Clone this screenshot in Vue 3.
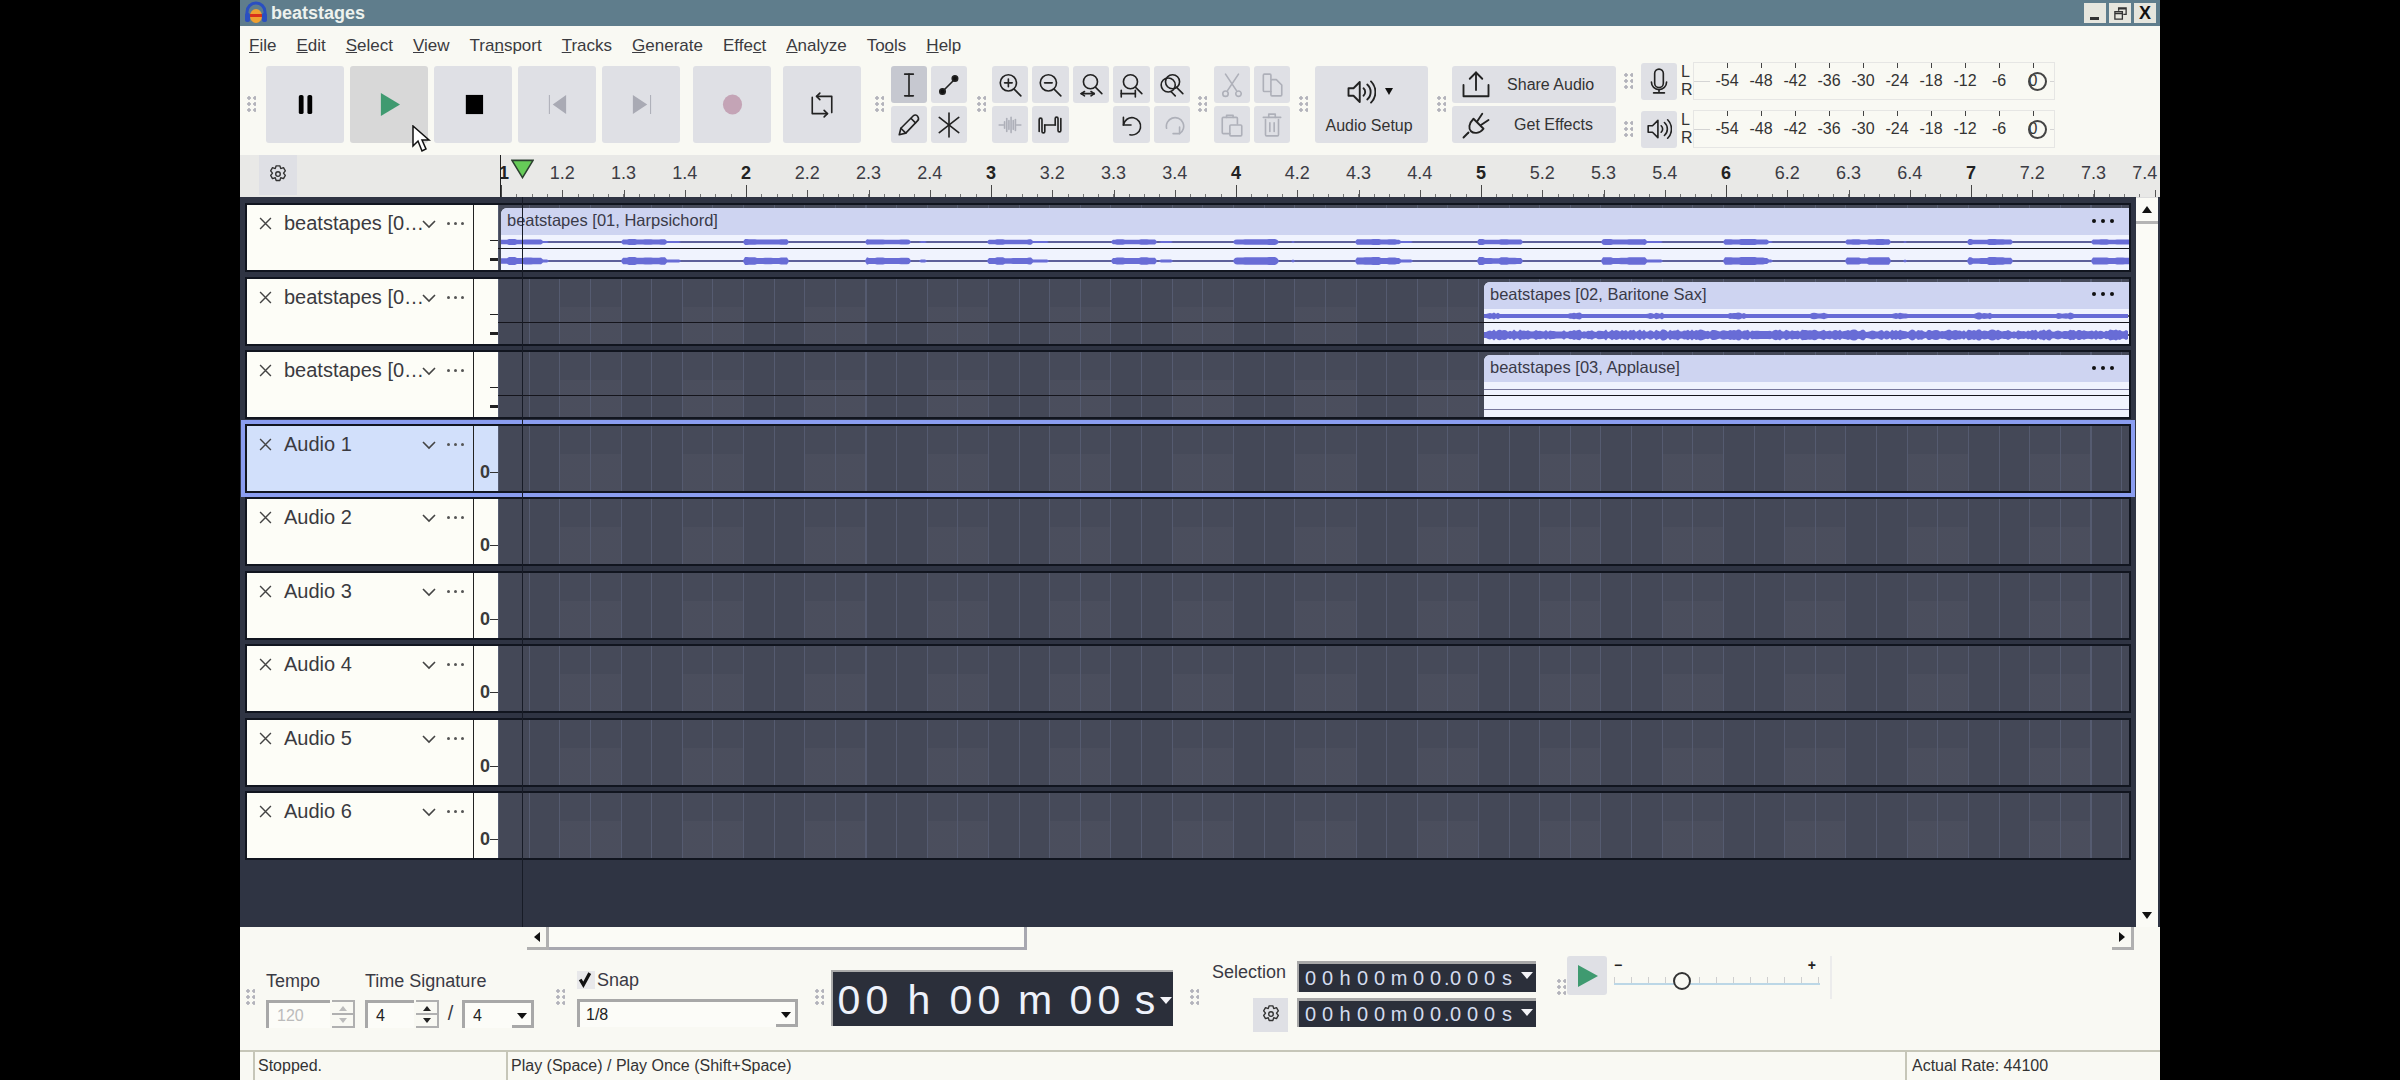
<script setup>
const menus = [
  ['', 'F', 'ile'], ['', 'E', 'dit'], ['', 'S', 'elect'], ['', 'V', 'iew'], ['Tra', 'n', 'sport'], ['', 'T', 'racks'],
  ['', 'G', 'enerate'], ['Effe', 'c', 't'], ['', 'A', 'nalyze'], ['To', 'o', 'ls'], ['', 'H', 'elp']
]

const icons = {
  ibeam: ['M8 2h8', 'M8 22h8', 'M12 2v20'],
  envelope: ['M6 18L18 6', 'M3.5 18a2.5 2.5 0 1 0 5 0a2.5 2.5 0 1 0-5 0Z', 'M15 6a2.5 2.5 0 1 0 5 0a2.5 2.5 0 1 0-5 0Z'],
  pencil: ['M3 21l1.500-6L16 3.500c1-1 3-1 4 .5s1 3 0 4L9 19.500z', 'M14 6l4 4', 'M4.500 15l4.500 4.500'],
  multi: ['M12 1v22', 'M3 5l18 14', 'M21 5L3 19'],
  zoomin: ['M3 10a7.500 7.500 0 1 0 15 0a7.500 7.500 0 1 0-15 0Z', 'M16 16l6 6', 'M7 10h7', 'M10.500 6.500v7'],
  zoomout: ['M3 10a7.500 7.500 0 1 0 15 0a7.500 7.500 0 1 0-15 0Z', 'M16 16l6 6', 'M7 10h7'],
  zoomsel: ['M5 9a6.500 6.500 0 1 0 13 0a6.500 6.500 0 1 0-13 0Z', 'M16 14l6 6', 'M3 20h12', 'M3 20l3-2', 'M3 20l3 2', 'M15 20l-3-2', 'M15 20l-3 2'],
  zoomfit: ['M5 9a6.500 6.500 0 1 0 13 0a6.500 6.500 0 1 0-13 0Z', 'M16 14l6 6', 'M3 20h13', 'M3 17v6', 'M16 17v6'],
  zoomtoggle: ['M2 12a6.500 6.500 0 1 0 13 0a6.500 6.500 0 1 0-13 0Z', 'M6 9a6.500 6.500 0 1 0 13 0a6.500 6.500 0 1 0-13 0Z', 'M16 14l6 6', 'M11 18l4 4'],
  silence: ['M2 12h4', 'M7 9v6', 'M9 6v12', 'M11 8v8', 'M13 5v14', 'M15 8v8', 'M17 7v10', 'M18 12h4'],
  trim: ['M2 18V7a1.300 1.300 0 0 1 2.600 0v11a1.300 1.300 0 0 0 2.600 0V12', 'M7 12h10', 'M22 6v11a1.300 1.300 0 0 1-2.600 0V6a1.300 1.300 0 0 0-2.600 0v6'],
  undo: ['M5 5v7h7', 'M5 12A8 8 0 1 1 11 21'],
  redo: ['M19 14v6h-6', 'M19 20A8 8 0 1 0 7 15'],
  cut: ['M6 2l10 15', 'M18 2L8 17', 'M3.500 20a2.500 2.500 0 1 0 5 0a2.500 2.500 0 1 0-5 0Z', 'M15.500 20a2.500 2.500 0 1 0 5 0a2.500 2.500 0 1 0-5 0Z'],
  copy: ['M11 18H5a1 1 0 0 1-1-1V3a1 1 0 0 1 1-1h5a1 1 0 0 1 1 1v4', 'M12 7h4l5 5v9a1 1 0 0 1-1 1h-8a1 1 0 0 1-1-1V8a1 1 0 0 1 1-1z'],
  paste: ['M10 20H4a1 1 0 0 1-1-1V6a1 1 0 0 1 1-1h12a1 1 0 0 1 1 1v5', 'M7 5V3h6v2', 'M11 12h9a1 1 0 0 1 1 1v8a1 1 0 0 1-1 1h-9a1 1 0 0 1-1-1v-8a1 1 0 0 1 1-1z'],
  trash: ['M6 7v14a1 1 0 0 0 1 1h10a1 1 0 0 0 1-1V7', 'M4 5h16', 'M9 5V2h6v3', 'M10 10v8', 'M14 10v8'],
  speaker: ['M2 9h4l5-5v16l-5-5H2z', 'M14 9a4 4 0 0 1 0 6', 'M17 6a8 8 0 0 1 0 12', 'M20 3.500a12 12 0 0 1 0 17'],
  share: ['M2 12v9h20v-9', 'M12 16V2', 'M7 7l5-5 5 5'],
  plug: ['M10 7l8 8c-3 4-8 4-10 2s-2-6 2-10z', 'M6 18l-4 4', 'M13 9l4-6', 'M16 12l6-4'],
  mic: ['M8 5a4 4 0 0 1 8 0v9a4 4 0 0 1-8 0z', 'M5 13a7 7 0 0 0 14 0', 'M12 20v2', 'M7 23h10'],
  gear: ['M10 2h4l1 3 3-1 2 3.500-2 2.500 2 2.500-2 3.500-3-1-1 3h-4l-1-3-3 1-2-3.500 2-2.500-2-2.500 2-3.500 3 1z', 'M9.500 11a2.500 2.500 0 1 0 5 0a2.500 2.500 0 1 0-5 0Z'],
  loop: ['M3 5v15h14', 'M21 19V4H7', 'M10 1L7 4l3 3', 'M14 17l3 3-3 3']
}

const toolBtns = [
  { i: 'ibeam', on: true }, { i: 'envelope' }, { i: 'pencil' }, { i: 'multi' }
]
const zoomBtns = [
  { i: 'zoomin' }, { i: 'zoomout' }, { i: 'zoomsel' }, { i: 'zoomfit' }, { i: 'zoomtoggle' },
  { i: 'silence', off: true }, { i: 'trim' }, { blank: true }, { i: 'undo' }, { i: 'redo', off: true }
]
const editBtns = ['cut', 'copy', 'paste', 'trash']
const meterLabels = ['-54', '-48', '-42', '-36', '-30', '-24', '-18', '-12', '-6', '0']

const beats = []
for (let bar = 1; bar <= 7; bar++) {
  for (let q = 1; q <= 4; q++) beats.push(q === 1 ? String(bar) : `${bar}.${q}`)
}

// deterministic wiggle so the waveforms look hand-recorded
function noise(x) {
  const s = Math.sin(x * 12.9898) * 43758.5453
  return s - Math.floor(s)
}

function band(width, center, ampAt) {
  let top = ''
  let bottom = ''
  for (let x = 0; x <= width; x += 2) {
    const a = ampAt(x)
    top += `${x === 0 ? 'M' : 'L'}${x} ${(center - a).toFixed(1)}`
    bottom = `L${x} ${(center + a).toFixed(1)}` + bottom
  }
  return top + bottom + 'Z'
}

const harpsi = (base, extra) => (x) => {
  const p = (x + 2) % 122.5
  if (p < 44) return base + noise(Math.floor(x / 8)) * extra
  if (p < 60 && noise(Math.floor(x / 12)) > 0.5) return base * 0.5
  return 0.4
}

const tracks = [
  { name: 'beatstapes [0…', stereo: true, clip: { label: 'beatstapes [01, Harpsichord]', left: 3, width: 1628, kind: 'wave', d1: band(1628, 7, harpsi(2.200, 0.800)), d2: band(1628, 26, harpsi(2.800, 1.200)) } },
  { name: 'beatstapes [0…', stereo: true, clip: { label: 'beatstapes [02, Baritone Sax]', left: 986, width: 645, kind: 'wave', d1: band(645, 7, (x) => 2 + (x % 82 < 16 ? noise(x) * 1.500 : 0)), d2: band(645, 26, (x) => 3 + noise(x) * 2.500) } },
  { name: 'beatstapes [0…', stereo: true, clip: { label: 'beatstapes [03, Applause]', left: 986, width: 645, kind: 'flat' } },
  { name: 'Audio 1', selected: true },
  { name: 'Audio 2' },
  { name: 'Audio 3' },
  { name: 'Audio 4' },
  { name: 'Audio 5' },
  { name: 'Audio 6' }
]

function cells(text, w0) {
  return text.split('').map((c) => ({ c, w: w0[c] || w0['0'] }))
}
const bigTime = cells('00h00m00s', { 0: 28, h: 56, m: 64, s: 44 })
const selTime = cells('00h00m00.000s', { 0: 17, h: 18, m: 22, '.': 3, s: 18 })
</script>

<template>
  <div class="window">
    <header class="titlebar">
      <svg class="logo" viewBox="0 0 24 24">
        <path d="M3 15V11a9 9 0 0 1 18 0v4" fill="none" stroke="#2a4fc0" stroke-width="3" />
        <rect x="1" y="12" width="5" height="9" rx="2" fill="#2a4fc0" />
        <rect x="18" y="12" width="5" height="9" rx="2" fill="#2a4fc0" />
        <ellipse cx="12" cy="15" rx="6" ry="7" fill="#f0a030" />
        <rect x="6" y="13" width="12" height="3" fill="#d8301c" />
      </svg>
      <span class="title-text">beatstages</span>
      <div class="winbtns">
        <span class="winbtn"><i class="w-min"></i></span>
        <span class="winbtn">
          <svg viewBox="0 0 16 16"><path d="M6 5V2h8v7h-3M2 6h8v8H2zM2 8h8M6 3h8" fill="none" stroke="#333" stroke-width="1.400" /></svg>
        </span>
        <span class="winbtn w-x">X</span>
      </div>
    </header>

    <nav class="menubar">
      <span v-for="m in menus" :key="m[1] + m[2]">{{ m[0] }}<u>{{ m[1] }}</u>{{ m[2] }}</span>
    </nav>

    <section class="toolbar">
      <span class="grip first"></span>
      <div class="transport">
        <div class="tbtn">
          <svg viewBox="0 0 24 24" class="big"><rect x="5" y="2" width="5" height="20" rx="2" /><rect x="14" y="2" width="5" height="20" rx="2" /></svg>
        </div>
        <div class="tbtn hover">
          <svg viewBox="0 0 24 24" class="big"><path d="M3 0l20 12L3 24z" fill="#3f9a70" /></svg>
        </div>
        <div class="tbtn">
          <svg viewBox="0 0 24 24" class="big"><rect x="4" y="2" width="18" height="20" /></svg>
        </div>
        <div class="tbtn">
          <svg viewBox="0 0 24 24" class="big"><path d="M3 2h1v20H3zM21 2v20L7 12z" fill="#a9aab4" /></svg>
        </div>
        <div class="tbtn">
          <svg viewBox="0 0 24 24" class="big"><path d="M21 2h1v20h-1zM3 2v20l15-10z" fill="#a9aab4" /></svg>
        </div>
        <div class="tbtn rec">
          <svg viewBox="0 0 24 24" class="big"><ellipse cx="12" cy="12" rx="10" ry="10.500" fill="#c4a4b6" /></svg>
        </div>
        <div class="tbtn loop">
          <svg viewBox="0 0 24 24" class="ic big"><path v-for="d in icons.loop" :key="d" :d="d" /></svg>
        </div>
      </div>

      <span class="grip g-tools"></span>
      <div class="btngrid tools">
        <div v-for="b in toolBtns" :key="b.i" class="sbtn" :class="{ on: b.on }">
          <svg viewBox="0 0 24 24" class="ic" :class="{ solid: b.i === 'envelope' }"><path v-for="d in icons[b.i]" :key="d" :d="d" /></svg>
        </div>
      </div>

      <span class="grip g-zoom"></span>
      <div class="btngrid zooms">
        <div v-for="(b, n) in zoomBtns" :key="n" :class="b.blank ? 'sblank' : 'sbtn'">
          <svg v-if="!b.blank" viewBox="0 0 24 24" class="ic" :class="{ off: b.off }"><path v-for="d in icons[b.i]" :key="d" :d="d" /></svg>
        </div>
      </div>

      <span class="grip g-edit"></span>
      <div class="btngrid edits">
        <div v-for="i in editBtns" :key="i" class="sbtn">
          <svg viewBox="0 0 24 24" class="ic off"><path v-for="d in icons[i]" :key="d" :d="d" /></svg>
        </div>
      </div>

      <span class="grip g-audio"></span>
      <div class="audio-setup">
        <div class="as-icon">
          <svg viewBox="0 0 24 24" class="ic"><path v-for="d in icons.speaker" :key="d" :d="d" /></svg>
          <i class="down"></i>
        </div>
        <span>Audio Setup</span>
      </div>

      <span class="grip g-share"></span>
      <div class="share">
        <div class="share-btn">
          <svg viewBox="0 0 24 24" class="ic wide"><path v-for="d in icons.share" :key="d" :d="d" /></svg>
          <span>Share Audio</span>
        </div>
        <div class="share-btn">
          <svg viewBox="0 0 24 24" class="ic wide"><path v-for="d in icons.plug" :key="d" :d="d" /></svg>
          <span class="ge">Get Effects</span>
        </div>
      </div>

      <div class="meters">
        <div v-for="kind in ['mic', 'speaker']" :key="kind" class="meter-row">
          <span class="grip g-meter"></span>
          <div class="mbtn">
            <svg viewBox="0 0 24 24" class="ic"><path v-for="d in icons[kind]" :key="d" :d="d" /></svg>
          </div>
          <div class="lr"><span>L</span><span>R</span></div>
          <div class="meter">
            <span v-for="l in meterLabels" :key="l" class="mcell">{{ l }}</span>
            <i class="mthumb"></i>
          </div>
        </div>
      </div>
    </section>

    <section class="ruler">
      <div class="ruler-side">
        <div class="gear-btn">
          <svg viewBox="0 0 24 24" class="ic gear"><path v-for="d in icons.gear" :key="d" :d="d" /></svg>
        </div>
      </div>
      <div class="ruler-scale">
        <span v-for="(b, n) in beats" :key="b" class="beat">
          <b class="blabel" :class="{ bar: !b.includes('.'), first: n === 0, last: n === beats.length - 1 }">{{ b }}</b>
        </span>
      </div>
    </section>

    <main class="main">
      <div class="tracks">
        <div v-for="(t, n) in tracks" :key="n" class="track" :class="{ selected: t.selected }">
          <div class="panel">
            <svg class="x" viewBox="0 0 12 12"><path d="M1 1l10 10M11 1L1 11" /></svg>
            <span class="tname">{{ t.name }}</span>
            <svg class="chev" viewBox="0 0 14 10"><path d="M1 2l6 6 6-6" /></svg>
            <span class="dots"><i></i><i></i><i></i></span>
          </div>
          <div class="vruler" :class="{ stereo: t.stereo }">
            <template v-if="t.stereo">
              <i class="vt thin"></i>
              <i class="vt thick"></i>
            </template>
            <span v-else class="vzero">0<i></i></span>
          </div>
          <div class="canvas" :class="{ stereo: t.stereo }">
            <div v-if="t.clip" class="clip" :style="{ marginLeft: t.clip.left + 'px', width: t.clip.width + 'px' }">
              <div class="clip-head">
                <span>{{ t.clip.label }}</span>
                <span class="cdots"><i></i><i></i><i></i></span>
              </div>
              <svg class="wave" :viewBox="`0 0 ${t.clip.width} 37`" :width="t.clip.width" height="37">
                <template v-if="t.clip.kind === 'wave'">
                  <path :d="`M0 7H${t.clip.width}M0 26H${t.clip.width}`" stroke="#20202c" stroke-width="1.400" />
                  <path :d="t.clip.d1" fill="#686cd6" />
                  <path :d="t.clip.d2" fill="#686cd6" />
                </template>
                <path v-else :d="`M0 7.500H${t.clip.width}M0 27.500H${t.clip.width}`" stroke="#77779c" stroke-width="1" />
              </svg>
            </div>
          </div>
        </div>
      </div>
      <div class="vscroll">
        <span class="arrow-btn up"></span>
        <span class="arrow-btn dn"></span>
      </div>
      <i class="playhead"></i>
    </main>

    <section class="hscroll">
      <span class="hbtn"><i class="tri-l"></i></span>
      <span class="hthumb"></span>
      <span class="htrack"></span>
      <span class="hbtn end"><i class="tri-r"></i></span>
    </section>

    <section class="bottom">
      <span class="grip b1"></span>
      <div class="field tempo">
        <label>Tempo</label>
        <div class="fline">
          <span class="input dim w64">120</span>
          <span class="spin dim"><i class="up"></i><i class="dn"></i></span>
        </div>
      </div>
      <div class="field sig">
        <label>Time Signature</label>
        <div class="fline">
          <span class="input w49">4</span>
          <span class="spin"><i class="up"></i><i class="dn"></i></span>
          <span class="slash">/</span>
          <span class="input combo w72">4<i class="cbtn"></i></span>
        </div>
      </div>
      <span class="grip b2"></span>
      <div class="field snap">
        <label class="snaplabel">
          <span class="check">
            <svg viewBox="0 0 16 16"><path d="M3 8l3 5 6-11" fill="none" stroke="#111" stroke-width="3" /></svg>
          </span>Snap
        </label>
        <div class="fline">
          <span class="input combo w221">1/8<i class="cbtn"></i></span>
        </div>
      </div>
      <span class="grip b3"></span>
      <div class="bigtime">
        <span v-for="(c, n) in bigTime" :key="n" class="cell" :style="{ width: c.w + 'px' }">{{ c.c }}</span>
        <i class="wtri"></i>
      </div>
      <span class="grip b4"></span>
      <div class="selection">
        <label>Selection</label>
        <div class="seltime">
          <span v-for="(c, n) in selTime" :key="n" class="cell" :style="{ width: c.w + 'px' }">{{ c.c }}</span>
          <i class="wtri"></i>
        </div>
        <div class="selgear">
          <svg viewBox="0 0 24 24" class="ic gear"><path v-for="d in icons.gear" :key="d" :d="d" /></svg>
        </div>
        <div class="seltime two">
          <span v-for="(c, n) in selTime" :key="n" class="cell" :style="{ width: c.w + 'px' }">{{ c.c }}</span>
          <i class="wtri"></i>
        </div>
      </div>
      <span class="grip b5"></span>
      <div class="playspeed">
        <div class="pbtn">
          <svg viewBox="0 0 24 24"><path d="M3 1l20 11L3 23z" fill="#3f9a70" /></svg>
        </div>
        <div class="slider">
          <div class="sl-signs"><span>−</span><span>+</span></div>
          <div class="sl-track"><i class="sl-thumb"></i></div>
        </div>
      </div>
    </section>

    <footer class="status">
      <span class="st st1">Stopped.</span>
      <span class="st st2">Play (Space) / Play Once (Shift+Space)</span>
      <span class="st st3">Actual Rate: 44100</span>
    </footer>

    <svg class="pin" viewBox="0 0 24 20"><path d="M1 1h22L12 19z" fill="#66cc58" stroke="#2c4030" stroke-width="1.600" /></svg>
    <svg class="pointer" viewBox="0 0 19 28"><path d="M1 1v20l5-5 4 10 4-2-4-9h7z" fill="#fff" stroke="#111" stroke-width="1.500" /></svg>
  </div>
</template>

<style>
html, body {
  background: #000;
}
</style>

<style scoped>
.window {
  position: relative;
  margin-left: 240px;
  width: 1920px;
  height: 1080px;
  overflow: hidden;
  display: flex;
  flex-direction: column;
  background: #f9f9f3;
  color: #333;
  font-family: "Liberation Sans", Arial, sans-serif;
  font-size: 16px;
}

.titlebar {
  height: 26px;
  flex: none;
  display: flex;
  align-items: center;
  background: #5f7d8c;
  padding-left: 4px;
}
.logo { width: 24px; height: 26px; }
.title-text {
  margin-left: 3px;
  font-size: 18px;
  font-weight: bold;
  color: #edf2ee;
}
.winbtns {
  margin-left: auto;
  display: flex;
  gap: 3px;
  margin-right: 4px;
}
.winbtn {
  width: 22px;
  height: 20px;
  background: #e6e6de;
  display: flex;
  align-items: center;
  justify-content: center;
  position: relative;
}
.winbtn svg { width: 15px; height: 15px; }
.w-min { position: absolute; left: 6px; bottom: 3px; width: 9px; height: 3px; background: #333; }
.w-x { font-weight: bold; font-size: 18px; color: #111; }

.menubar {
  height: 38px;
  flex: none;
  box-sizing: border-box;
  display: flex;
  align-items: center;
  gap: 20px;
  padding: 2px 0 0 9px;
  font-size: 17px;
  color: #3b3b40;
}

.toolbar {
  height: 91px;
  flex: none;
  box-sizing: border-box;
  display: flex;
  align-items: flex-start;
  padding: 2px 0 0 6px;
}
.grip {
  flex: none;
  width: 10px;
  height: 18px;
  margin-top: 29px;
  background-image: radial-gradient(circle, #b3b3bb 1.500px, transparent 2px);
  background-size: 6px 6px;
}
.g-tools { margin-left: 13px; }
.g-zoom { margin-left: 9px; }
.g-edit { margin-left: 7px; }
.g-audio { margin-left: 8px; }
.g-share { margin-left: 8px; }

.transport {
  display: flex;
  gap: 6.100px;
  margin-left: 10px;
}
.tbtn {
  width: 78px;
  height: 77px;
  background: #dfe0e5;
  border-radius: 3px;
  display: flex;
  align-items: center;
  justify-content: center;
}
.tbtn.hover { background: #d8d8d8; }
.tbtn.rec { margin-left: 7px; }
.tbtn.loop { margin-left: 5px; }
.big { width: 23px; height: 23px; fill: #000; }
.ic {
  width: 26px;
  height: 26px;
  fill: none;
  stroke: #222;
  stroke-width: 1.500;
  stroke-linecap: round;
  stroke-linejoin: round;
}
.ic.big { fill: none; width: 26px; height: 26px; }
.ic.off { stroke: #aeb0b9; }
.ic.solid path:not(:first-child) { fill: #111; }
.ic.wide { width: 30px; height: 30px; }
.ic.gear { width: 22px; height: 22px; stroke: #333; }

.btngrid {
  display: grid;
  grid-template-columns: repeat(2, 36px);
  grid-auto-rows: 37px;
  gap: 3px 4px;
}
.tools { margin-left: 7px; }
.zooms { margin-left: 6px; grid-template-columns: repeat(5, 36.500px); }
.edits { margin-left: 7px; }
.sbtn {
  background: #dfe0e5;
  border-radius: 3px;
  display: flex;
  align-items: center;
  justify-content: center;
}
.sbtn.on { background: #c6c8d0; }

.audio-setup {
  width: 113px;
  height: 77px;
  margin-left: 7px;
  box-sizing: border-box;
  padding-right: 5px;
  background: #dfe0e5;
  border-radius: 3px;
  display: flex;
  flex-direction: column;
  align-items: center;
  justify-content: center;
  gap: 10px;
  font-size: 16px;
}
.as-icon { display: flex; align-items: center; gap: 9px; margin-top: 2px; }
.as-icon .ic { width: 30px; height: 30px; }
.down {
  width: 0;
  height: 0;
  border-left: 4.500px solid transparent;
  border-right: 4.500px solid transparent;
  border-top: 7px solid #111;
}

.share {
  margin-left: 6px;
  display: flex;
  flex-direction: column;
  gap: 3px;
}
.share-btn {
  width: 164px;
  height: 37px;
  background: #dfe0e5;
  border-radius: 3px;
  display: flex;
  align-items: center;
  padding-left: 9px;
  box-sizing: border-box;
}
.share-btn span { margin-left: 16px; }
.share-btn .ge { margin-left: 23px; }

.meters {
  margin-top: -4px;
  margin-left: 7px;
  display: flex;
  flex-direction: column;
  gap: 10px;
}
.meter-row {
  display: flex;
  align-items: center;
  height: 38px;
}
.meter-row .grip { margin-top: 0; }
.mbtn {
  width: 36px;
  height: 37px;
  margin-left: 8px;
  background: #dfe0e5;
  border-radius: 3px;
  display: flex;
  align-items: center;
  justify-content: center;
}
.lr {
  width: 12px;
  margin-left: 4px;
  display: flex;
  flex-direction: column;
  font-size: 16px;
  line-height: 18px;
}
.meter {
  position: relative;
  width: 362px;
  height: 38px;
  box-sizing: border-box;
  padding-left: 16px;
  border: 1px solid #e6e6e4;
  display: flex;
  align-items: center;
  background: linear-gradient(#d4d4d4, #d4d4d4) 0 50% / 100% 1px no-repeat;
}
.mcell {
  position: relative;
  width: 34px;
  flex: none;
  text-align: center;
  font-size: 16px;
  color: #333;
  background: #f9f9f3;
}
.mcell::before {
  content: "";
  position: absolute;
  left: 50%;
  top: -9px;
  width: 1px;
  height: 5px;
  background: #444;
}
.mthumb {
  position: absolute;
  left: 334px;
  top: 9px;
  width: 15px;
  height: 15px;
  border: 2px solid #444;
  border-radius: 50%;
}

.ruler {
  height: 42px;
  flex: none;
  display: flex;
  background: #e9e9e7;
}
.ruler-side {
  width: 260px;
  flex: none;
  padding-left: 19px;
  box-sizing: border-box;
}
.gear-btn {
  width: 38px;
  height: 40px;
  background: #dfe0e5;
  display: flex;
  align-items: center;
  justify-content: center;
}
.ruler-scale {
  flex: 1;
  display: flex;
  overflow: hidden;
  border-left: 1px solid #222;
  background:
    repeating-linear-gradient(90deg, #444 0 1px, transparent 1px 245px) 0 100% / 100% 12px no-repeat,
    repeating-linear-gradient(90deg, #555 0 1px, transparent 1px 61.250px) 0 100% / 100% 7px no-repeat,
    repeating-linear-gradient(90deg, #777 0 1px, transparent 1px 15.312px) 0 100% / 100% 3px no-repeat;
}
.beat {
  flex: none;
  width: 61.250px;
}
.blabel {
  display: block;
  width: 40px;
  margin-left: -20px;
  padding-top: 8px;
  text-align: center;
  font-size: 18px;
  font-weight: normal;
  color: #3c3c44;
}
.blabel.bar { font-weight: bold; color: #222; }
.blabel.first { margin-left: -17px; }
.blabel.last { margin-left: -30px; }

.main {
  position: relative;
  height: 730px;
  flex: none;
  display: flex;
  background: #2f3443;
}
.tracks {
  flex: none;
  width: 1882px;
  margin: 8px 7px 0 7px;
  display: flex;
  flex-direction: column;
  gap: 8.500px;
}
.track {
  height: 65px;
  flex: none;
  display: flex;
  background: #fdfdf7;
  box-shadow: 0 0 0 2px #11151f;
}
.track.selected {
  background: #d2e0fb;
  box-shadow: 0 0 0 2px #11151f, 0 0 0 6px #8a9df0;
  z-index: 1;
}
.panel {
  width: 226px;
  flex: none;
  display: flex;
  align-items: flex-start;
  padding-top: 7px;
  box-sizing: border-box;
  font-size: 20px;
  color: #3a3a40;
  height: 100%;
}
.x {
  width: 13px;
  height: 13px;
  margin: 5px 0 0 12px;
  fill: none;
  stroke: #444;
  stroke-width: 1.300;
}
.tname {
  margin-left: 12px;
  width: 133px;
  white-space: nowrap;
}
.chev {
  width: 14px;
  height: 10px;
  margin: 7px 0 0 5px;
  fill: none;
  stroke: #444;
  stroke-width: 1.600;
}
.dots {
  display: flex;
  gap: 4px;
  margin: 10px 0 0 11px;
}
.dots i {
  width: 3px;
  height: 3px;
  border-radius: 50%;
  background: #555;
}
.vruler {
  width: 25px;
  flex: none;
  position: relative;
  border-left: 1px solid #222;
  box-sizing: border-box;
}
.vt {
  position: absolute;
  right: 0;
  width: 8px;
  background: #222;
}
.vt.thin { top: 35px; height: 1px; }
.vt.thick { top: 53px; height: 3px; }
.vzero {
  position: absolute;
  left: 6px;
  top: 36px;
  display: flex;
  align-items: center;
  font-weight: bold;
  font-size: 18px;
  color: #3a3a3a;
}
.vzero i {
  display: block;
  width: 8px;
  height: 1px;
  background: #333;
}
.canvas {
  flex: 1;
  position: relative;
  box-sizing: border-box;
  padding-top: 3px;
  background-color: #444857;
  background-image:
    repeating-linear-gradient(90deg, #555b70 0 1px, transparent 1px 30.625px),
    repeating-linear-gradient(90deg, transparent 0 61.250px, rgba(255, 255, 255, 0.035) 61.250px 122.500px),
    repeating-linear-gradient(90deg, transparent 0 61.250px, rgba(255, 255, 255, 0.012) 61.250px 122.500px);
  background-size: 100% 100%, 100% 37px, 100% 28px;
  background-position: 0 0, 0 100%, 0 0;
  background-repeat: no-repeat;
}
.canvas.stereo::after {
  content: "";
  position: absolute;
  left: 0;
  right: 0;
  top: 43px;
  height: 1px;
  background: #15151c;
}
.clip {
  height: 62px;
  display: flex;
  flex-direction: column;
  background: #f0f3fe;
  border-top-left-radius: 6px;
  overflow: hidden;
}
.clip-head {
  height: 25px;
  flex: none;
  background: #ced4f1;
  display: flex;
  align-items: center;
  justify-content: space-between;
  padding: 0 15px 2px 6px;
  font-size: 16.500px;
  color: #3a3a48;
}
.cdots { display: flex; gap: 5px; }
.cdots i {
  width: 4px;
  height: 4px;
  border-radius: 50%;
  background: #111;
}
.wave { display: block; flex: none; }

.playhead {
  position: absolute;
  left: 282px;
  top: 0;
  bottom: 0;
  width: 1px;
  background: #171b26;
  z-index: 2;
}

.vscroll {
  width: 22px;
  flex: none;
  background: #fbfbf6;
  display: flex;
  flex-direction: column;
  justify-content: space-between;
  border-top: 1px solid #ddd;
  box-sizing: border-box;
}
.arrow-btn {
  height: 23px;
  position: relative;
  display: block;
}
.arrow-btn.up { border-bottom: 3px solid #b4b4b4; }
.arrow-btn::after {
  content: "";
  position: absolute;
  left: 6px;
  top: 8px;
  border-left: 5px solid transparent;
  border-right: 5px solid transparent;
}
.arrow-btn.up::after { border-bottom: 7px solid #111; }
.arrow-btn.dn::after { border-top: 7px solid #111; }

.hscroll {
  height: 23px;
  flex: none;
  display: flex;
  margin: 0 26px 0 287px;
}
.hbtn {
  width: 22px;
  flex: none;
  display: flex;
  align-items: center;
  justify-content: center;
  border-right: 3px solid #b0b0b0;
  border-bottom: 3px solid #b0b0b0;
  box-sizing: border-box;
}
.tri-l, .tri-r {
  border-top: 5px solid transparent;
  border-bottom: 5px solid transparent;
}
.tri-l { border-right: 6px solid #111; }
.tri-r { border-left: 6px solid #111; }
.hthumb {
  width: 478px;
  flex: none;
  border-right: 3px solid #a8a8b0;
  border-bottom: 3px solid #a8a8b0;
  box-sizing: border-box;
  background: #fbfbf6;
}
.htrack { flex: 1; }

.bottom {
  height: 102px;
  flex: none;
  box-sizing: border-box;
  border-bottom: 2px solid #c6c6b8;
  display: flex;
  align-items: flex-start;
  font-size: 18px;
  color: #3a3a44;
  position: relative;
}
.b1 { margin: 38px 0 0 5px; }
.b2 { margin: 38px 0 0 21px; }
.b3 { margin: 38px 0 0 16px; }
.b4 { margin: 38px 0 0 16px; }
.b5 { margin: 28px 0 0 20px; }
.field { margin-top: 16px; }
.field label { display: block; height: 30px; line-height: 30px; white-space: nowrap; }
.tempo { margin-left: 11px; }
.sig { margin-left: 10px; }
.snap { margin-left: 12px; }
.fline { display: flex; margin-top: 4px; height: 28px; }
.input {
  position: relative;
  display: block;
  box-sizing: border-box;
  border-left: 3px solid #a8a8a8;
  border-top: 3px solid #a8a8a8;
  padding-left: 8px;
  line-height: 26px;
  font-size: 16px;
  color: #222;
  background: #fcfcf8;
}
.input.dim { color: #bbb; }
.w64 { width: 64px; }
.w49 { width: 49px; }
.w72 { width: 72px; }
.w221 { width: 221px; padding-left: 6px; }
.spin {
  width: 23px;
  margin-left: 2px;
  display: flex;
  flex-direction: column;
  align-items: center;
  justify-content: space-around;
  border: 2px solid #b0b0b0;
  border-left: 0;
  box-sizing: border-box;
  background: linear-gradient(#b0b0b0, #b0b0b0) 0 50% / 100% 2px no-repeat;
}
.spin .up, .spin .dn {
  border-left: 4px solid transparent;
  border-right: 4px solid transparent;
}
.spin .up { border-bottom: 5px solid #222; }
.spin .dn { border-top: 5px solid #222; }
.spin.dim .up { border-bottom-color: #bbb; }
.spin.dim .dn { border-top-color: #bbb; }
.slash { width: 23px; text-align: center; font-size: 20px; line-height: 26px; }
.cbtn {
  position: absolute;
  right: 0;
  top: 0;
  width: 22px;
  height: 25px;
  box-sizing: border-box;
  border-right: 3px solid #a8a8a8;
  border-bottom: 3px solid #a8a8a8;
}
.cbtn::after {
  content: "";
  position: absolute;
  left: 5px;
  top: 10px;
  border-left: 5px solid transparent;
  border-right: 5px solid transparent;
  border-top: 6px solid #111;
}
.snaplabel { display: flex !important; align-items: center; margin-top: -1px; }
.check {
  width: 18px;
  height: 18px;
  margin-right: 2px;
  background: #e8e8ea;
  display: block;
}
.check svg { width: 17px; height: 17px; display: block; }
.cell {
  display: block;
  flex: none;
  text-align: center;
}
.wtri {
  position: absolute;
  width: 0;
  height: 0;
  border-left: 6px solid transparent;
  border-right: 6px solid transparent;
  border-top: 7px solid #f4f4f8;
}
.bigtime {
  position: relative;
  width: 342px;
  height: 56px;
  margin: 20px 0 0 7px;
  flex: none;
  box-sizing: border-box;
  border-top: 2px solid #aaa;
  border-left: 2px solid #aaa;
  background: #2b2f3a;
  color: #eef2fb;
  font-size: 41px;
  line-height: 56px;
  display: flex;
  padding-left: 2px;
}
.bigtime .wtri { right: 1px; top: 25px; }
.selection {
  margin: 11px 0 0 13px;
  display: grid;
  grid-template-columns: 85px 239px;
  grid-template-rows: 31px 29px;
  row-gap: 6px;
  flex: none;
}
.selection label { line-height: 22px; }
.seltime {
  position: relative;
  box-sizing: border-box;
  border-top: 3px solid #a8a8a8;
  border-left: 2px solid #a8a8a8;
  background: #2b2f3a;
  color: #d4dcee;
  font-size: 20px;
  line-height: 28px;
  display: flex;
  padding-left: 3px;
}
.seltime.two { line-height: 26px; }
.seltime .wtri { right: 3px; top: 8px; }
.selgear {
  width: 35px;
  height: 34px;
  margin-left: 41px;
  background: #dfe0e5;
  display: flex;
  align-items: center;
  justify-content: center;
}
.playspeed {
  display: flex;
  margin: 6px 0 0 1px;
  height: 43px;
  border-right: 2px solid #ececec;
  flex: none;
}
.pbtn {
  width: 40px;
  height: 39px;
  background: #dfe0e5;
  border-radius: 3px;
  display: flex;
  align-items: center;
  justify-content: center;
}
.pbtn svg { width: 24px; height: 24px; }
.slider {
  width: 206px;
  margin-left: 7px;
  margin-right: 10px;
}
.sl-signs {
  display: flex;
  justify-content: space-between;
  padding-right: 4px;
  font-size: 14px;
  font-weight: bold;
  line-height: 14px;
  height: 15px;
  margin-top: 2px;
  color: #222;
}
.sl-track {
  position: relative;
  margin-top: 4px;
  height: 6px;
  border-bottom: 2px solid #bcd7e6;
  background: repeating-linear-gradient(90deg, #cfcfcf 0 1px, transparent 1px 17px);
}
.sl-thumb {
  position: absolute;
  left: 59px;
  top: -5px;
  width: 14px;
  height: 14px;
  background: #f9f9f3;
  border: 2px solid #333;
  border-radius: 50%;
}

.status {
  height: 28px;
  flex: none;
  display: flex;
  padding-left: 13px;
  font-size: 16px;
  color: #333;
}
.st {
  box-sizing: border-box;
  border-left: 2px solid #c6c6b8;
  padding: 5px 0 0 3px;
  white-space: nowrap;
}
.st1 { width: 248px; margin-right: 5px; }
.st2 { width: 1395px; margin-right: 4px; }
.st3 { flex: 1; padding-left: 5px; }

.pin {
  position: absolute;
  left: 271px;
  top: 159px;
  width: 23px;
  height: 20px;
  z-index: 3;
}
.pointer {
  position: absolute;
  left: 172px;
  top: 125px;
  width: 19px;
  height: 28px;
  z-index: 4;
}
</style>
